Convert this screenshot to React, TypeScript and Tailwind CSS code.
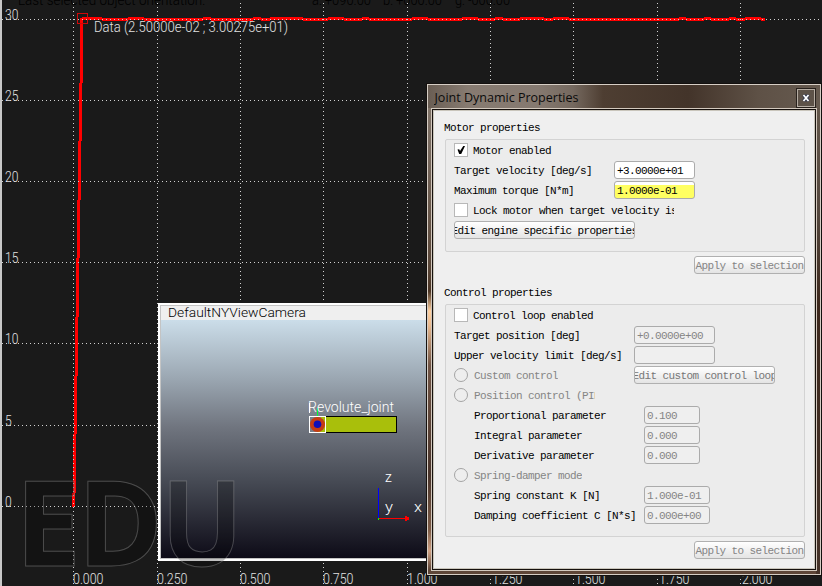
import type { ReactNode } from "react";

const GRID_X = [73, 157, 240, 323, 407, 490, 573, 657, 740];
const GRID_Y = [19, 100, 181, 262, 343, 425, 506];
const Y_LABELS = ["30", "25", "20", "15", "10", "5", "0"];
const X_LABELS = ["0.000", "0.250", "0.500", "0.750", "1.000", "1.250", "1.500", "1.750", "2.000"];

// Rising edge of the velocity curve: [x, top, bottom]
const RISE = [
  [80, 18, 83], [79, 83, 141], [78, 141, 200], [77, 200, 258], [76, 258, 317],
  [75, 317, 376], [74, 376, 434], [73, 434, 493], [72, 493, 507],
];

// Ranges where the settled curve sits one pixel higher
const HIGH = [
  [82, 102], [128, 144], [203, 211], [253, 261], [270, 303], [328, 344], [362, 369], [412, 428],
  [462, 478], [495, 503], [520, 544], [553, 569], [679, 686], [704, 711], [729, 736], [745, 761],
];
const LOW = HIGH.map(([, end], i) => [end, i + 1 < HIGH.length ? HIGH[i + 1][0] : 765]);

const PLOT_FONT = "font-['Roboto','Liberation_Sans',sans-serif] font-light text-[14px]";

function Plot() {
  return (
    <svg className={`absolute inset-0 ${PLOT_FONT}`} width="822" height="586">
      <g fill="#000">
        <text x="18" y="5" textLength="187" lengthAdjust="spacingAndGlyphs">Last selected object orientation:</text>
        <text x="312" y="5" textLength="59" lengthAdjust="spacingAndGlyphs">a: +090.00</text>
        <text x="383" y="5" textLength="59" lengthAdjust="spacingAndGlyphs">b: +000.00</text>
        <text x="455" y="5" textLength="55" lengthAdjust="spacingAndGlyphs">g: -000.00</text>
      </g>
      <rect width="2" height="586" fill="#c8c8c8" />
      <g fill="#f00" shapeRendering="crispEdges">
        {RISE.map(([x, a, b]) => <rect key={x} x={x} y={a} width="3" height={b - a} />)}
        {HIGH.map(([a, b]) => <rect key={a} x={a} y="17" width={b - a} height="3" />)}
        {LOW.map(([a, b]) => <rect key={a} x={a} y="18" width={b - a} height="3" />)}
      </g>
      <rect x="77.5" y="13.5" width="10" height="10" fill="none" stroke="#d00808" />
      <g stroke="#d2d2d2" strokeDasharray="1 3" shapeRendering="crispEdges">
        {GRID_X.map((x) => <line key={x} x1={x + 0.5} x2={x + 0.5} y1="3" y2="586" />)}
        {GRID_Y.map((y) => <line key={y} x1="2" x2="822" y1={y + 0.5} y2={y + 0.5} />)}
      </g>
      <g fill="#e2e2e2">
        {GRID_Y.map((y, i) => (
          <text key={y} x="5" y={y + 1} textLength={Y_LABELS[i].length * 6.7} lengthAdjust="spacingAndGlyphs">
            {Y_LABELS[i]}
          </text>
        ))}
        {GRID_X.map((x, i) => (
          <text key={x} x={x < 480 ? x : x + 2} y="584" textLength="30.5" lengthAdjust="spacingAndGlyphs">
            {X_LABELS[i]}
          </text>
        ))}
        <text x="94" y="32" textLength="194" lengthAdjust="spacingAndGlyphs">Data (2.50000e-02 ; 3.00275e+01)</text>
      </g>
    </svg>
  );
}

function CameraView() {
  return (
    <section className="absolute left-[158px] top-[303px] flex h-[258px] w-[272px] flex-col border-2 border-white">
      <header className="h-[15px] border-l border-t border-[#c4c4c4] bg-[#efefef]">
        <svg width="267" height="14" className={`block ${PLOT_FONT}`}>
          <text x="7" y="10.5" fill="#000" className="text-[13.5px]" textLength="138" lengthAdjust="spacingAndGlyphs">DefaultNYViewCamera</text>
        </svg>
      </header>
      <div className="flex-1 border-b border-l border-[#c4c4c4] bg-[linear-gradient(#cbdde9_0%,#9ca8b3_24%,#70757f_45%,#464a54_68%,#0d0b17_100%)]">
        <svg width="267" height="238" viewBox="161 320 267 238" className={`block ${PLOT_FONT}`}>
          <g shapeRendering="crispEdges">
            <rect x="309.5" y="416.5" width="87" height="16" fill="#a9bf0b" stroke="#000" />
            <path d="M309 417h12v6h-12zM309 426h8v7h-8z" fill="#77808c" />
            <rect x="317" y="408" width="1" height="9" fill="#0f3" />
          </g>
          <circle cx="317.5" cy="424.5" r="7.6" fill="#c53c13" />
          <circle cx="317.5" cy="424.3" r="3.8" fill="#0e0eb8" />
          <rect x="309.5" y="416.5" width="16" height="16" fill="none" stroke="#fff" shapeRendering="crispEdges" />
          <path d="M309.5 403v10" stroke="#fff" />
          <text x="308" y="412" fill="#fff" textLength="86" lengthAdjust="spacingAndGlyphs">Revolute_joint</text>
          <g shapeRendering="crispEdges">
            <rect x="378" y="488" width="1" height="30" fill="#00f" />
            <rect x="379" y="518" width="29" height="1" fill="#f00" />
            <path d="M405 516h2v1h2v3h-2v1h-2z" fill="#f00" />
            <rect x="378" y="518" width="1" height="2" fill="#0f0" />
          </g>
          <g fill="#fff">
            <text x="385" y="482">z</text>
            <text x="385" y="512" textLength="8" lengthAdjust="spacingAndGlyphs">y</text>
            <text x="414" y="512" textLength="8" lengthAdjust="spacingAndGlyphs">x</text>
          </g>
        </svg>
      </div>
    </section>
  );
}

function Watermark() {
  return (
    <svg className="absolute inset-0 font-['Open_Sans',sans-serif] text-[118px] font-bold" width="822" height="586">
      <g fill="#000" fillOpacity="0.24" stroke="#aaa" strokeOpacity="0.36">
        <text x="15" y="565.5">E</text>
        <text transform="translate(77.5 565.5) scale(0.98 1)">D</text>
        <text transform="translate(161 565.5) scale(0.92 1)">U</text>
      </g>
    </svg>
  );
}

function Row({ children, indent = "pl-2" }: { children?: ReactNode; indent?: string }) {
  return <div className={`flex h-5 items-center ${indent}`}>{children}</div>;
}

function Label({ children, className = "" }: { children: ReactNode; className?: string }) {
  return <span className={`shrink-0 pt-0.5 leading-4 ${className}`}>{children}</span>;
}

function Checkbox({ checked = false }: { checked?: boolean }) {
  return (
    <span className="mr-[5px] flex size-3.5 shrink-0 items-center justify-center border border-[#b8b8b8] bg-white">
      {checked && (
        <svg width="10" height="10" viewBox="0 0 10 10">
          <path d="M1.5 4.5 3.2 4.2 4 6 7.3 1 9 1 5.2 9 3.2 9z" fill="#000" />
        </svg>
      )}
    </span>
  );
}

function Radio({ label, width = "w-auto" }: { label: string; width?: string }) {
  return (
    <Row>
      <span className="mr-[6px] size-3.5 shrink-0 rounded-full border border-[#a4a4a4] bg-[#eee]" />
      <Label className={`overflow-hidden text-[#858585] ${width}`}>{label}</Label>
    </Row>
  );
}

function Field({ label, labelWidth, value, box, indent }: {
  label: string; labelWidth: string; value: string; box: string; indent?: string;
}) {
  return (
    <Row indent={indent}>
      <Label className={labelWidth}>{label}</Label>
      <span className={`flex h-[18px] shrink-0 items-center rounded-[3px] border border-[#ababab] pl-[2px] ${box}`}>
        <Label>{value}</Label>
      </span>
    </Row>
  );
}

function Button({ children, className }: { children: ReactNode; className: string }) {
  return (
    <span className={`flex h-[18px] shrink-0 items-center justify-center overflow-hidden rounded-[3px] border border-[#b0b0b0] bg-linear-to-b from-white to-[#e4e4e4] ${className}`}>
      <Label>{children}</Label>
    </span>
  );
}

function Dialog() {
  const disabled = "bg-[#efefef] text-[#858585]";
  return (
    <section className="absolute left-[426px] top-[83px] flex h-[493px] w-[396px] flex-col border border-[#14100e] bg-[#4a382d]">
      <div className="flex flex-1 flex-col border border-[#d6cec5] bg-[linear-gradient(#84786d_0px,#796b60_60px,#5a4739_180px,#4a3424_206px,#ffd0a0_226px,#e9b98f_240px,#705445_280px,#49342b_390px,#7d5c47_445px,#d0a184_466px,#5e4638_485px)]">
        <div className="flex flex-1 flex-col bg-[linear-gradient(#665a4e,#54473d_130px,#3d281c_220px,#463329)] bg-[position:388px_0] bg-no-repeat">
          <header className="flex h-[23px] items-center justify-between bg-[linear-gradient(90deg,#6a5e54_0,#877b71_40px,#857970_110px,#75695f_145px,#4e3e32_175px,#43342a_260px,#5e5146_330px,#665a4f_390px)] pl-[6px] pr-[5px] pt-[2px]">
            <svg width="160" height="20" className="block font-['Open_Sans',sans-serif] text-[13px]">
              <text x="0.5" y="14" fill="#0b0b0b" textLength="144" lengthAdjust="spacingAndGlyphs">Joint Dynamic Properties</text>
            </svg>
            <span className="flex h-[18px] w-[18px] items-center justify-center border border-[#b5aca2] bg-[#5d5248] outline outline-[#28211c]">
              <svg width="8" height="8" viewBox="0 0 8 8">
                <path d="M1.5 1 6.5 7M6.5 1 1.5 7" stroke="#30354d" strokeWidth="3.4" />
                <path d="M1.5 1 6.5 7M6.5 1 1.5 7" stroke="#fff" strokeWidth="1.8" />
              </svg>
            </span>
          </header>
          <div className="mb-[3px] ml-[3px] mr-[3px] flex flex-1 border border-[#d3c9be]">
            <main className="flex flex-1 flex-col border border-[#15100d] bg-[#efefef] pl-[12px] pr-[10px] pt-[10px] font-['Liberation_Mono',monospace] text-[11px] leading-5 tracking-[-0.6px] whitespace-pre text-black shadow-[inset_0_0_0_1px_#c9c5bb]">
              <h2 className="-ml-px h-[19px] shrink-0 leading-[17px]">Motor properties</h2>
              <div className="h-[113px] shrink-0 rounded-[2px] border border-[#d3d3d3] bg-[#ececec]">
                <Row><Checkbox checked /><Label>Motor enabled</Label></Row>
                <Field label="Target velocity [deg/s]" labelWidth="w-[160px]" value="+3.0000e+01" box="w-[81px] bg-white" />
                <Field label="Maximum torque [N*m]" labelWidth="w-[160px]" value="1.0000e-01" box="w-[81px] bg-[linear-gradient(#fff_3px,#ffff61_3px)]" />
                <Row>
                  <Checkbox />
                  <Label className="w-[201px] overflow-hidden">Lock motor when target velocity is zero</Label>
                </Row>
                <Row><Button className="w-[181px]">Edit engine specific properties</Button></Row>
              </div>
              <div className="flex h-[41px] shrink-0 justify-end pt-[4px]">
                <Button className="w-[111px] text-[#858585]">Apply to selection</Button>
              </div>
              <div className="-mt-px h-[12px] shrink-0">
                <h2 className="-ml-px -mt-[9px]">Control properties</h2>
              </div>
              <div className="h-[233px] shrink-0 rounded-[2px] border border-[#d3d3d3] bg-[#ececec]">
                <Row><Checkbox /><Label>Control loop enabled</Label></Row>
                <Field label="Target position [deg]" labelWidth="w-[180px]" value="+0.0000e+00" box={`w-[81px] ${disabled}`} />
                <Field label="Upper velocity limit [deg/s]" labelWidth="w-[180px]" value="" box={`w-[81px] ${disabled}`} />
                <div className="flex">
                  <div className="w-[188px]"><Radio label="Custom control" /></div>
                  <Row indent="pl-0"><Button className="w-[141px] text-[#777]">Edit custom control loop</Button></Row>
                </div>
                <Radio label="Position control (PID)" width="w-[121px]" />
                <Field indent="pl-7" label="Proportional parameter" labelWidth="w-[170px]" value="0.100" box={`w-[56px] ${disabled}`} />
                <Field indent="pl-7" label="Integral parameter" labelWidth="w-[170px]" value="0.000" box={`w-[56px] ${disabled}`} />
                <Field indent="pl-7" label="Derivative parameter" labelWidth="w-[170px]" value="0.000" box={`w-[56px] ${disabled}`} />
                <Radio label="Spring-damper mode" />
                <Field indent="pl-7" label="Spring constant K [N]" labelWidth="w-[170px]" value="1.000e-01" box={`w-[66px] ${disabled}`} />
                <Field indent="pl-7" label="Damping coefficient C [N*s]" labelWidth="w-[170px]" value="0.000e+00" box={`w-[66px] ${disabled}`} />
              </div>
              <div className="flex justify-end pt-[4px]">
                <Button className="w-[111px] text-[#858585]">Apply to selection</Button>
              </div>
            </main>
          </div>
        </div>
      </div>
    </section>
  );
}

export default function App() {
  return (
    <div className="relative h-[586px] w-[822px] overflow-hidden bg-[#1a1a1a]">
      <Plot />
      <CameraView />
      <Watermark />
      <Dialog />
    </div>
  );
}
